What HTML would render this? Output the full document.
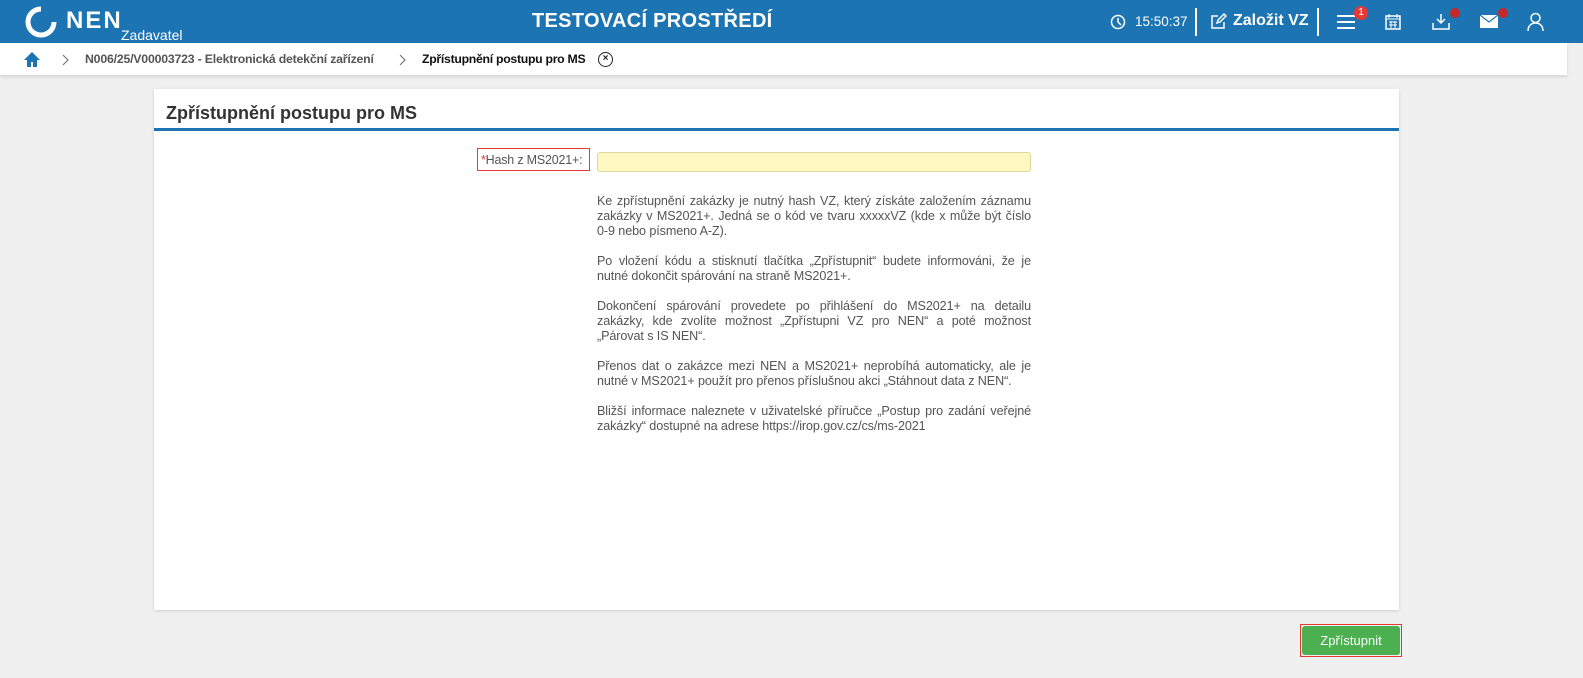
<!DOCTYPE html><html><head><meta charset="utf-8"><style>
*{box-sizing:border-box;margin:0;padding:0}
body{width:1583px;height:678px;background:#f0f0f0;font-family:"Liberation Sans",sans-serif;position:relative;overflow:hidden}
.hdr{position:absolute;left:0;top:0;width:1583px;height:43px;background:#1d74b2;color:#fff}
.bc{position:absolute;left:0;top:43px;width:1567px;height:32px;background:#fff;box-shadow:0 2px 3px rgba(0,0,0,.12);font-size:12.3px;font-weight:bold;color:#555;white-space:nowrap}
.card{position:absolute;left:154px;top:89px;width:1245px;height:521px;background:#fff;box-shadow:0 1px 3px rgba(0,0,0,.15)}
.p{position:absolute;left:597px;width:434px;font-size:12.6px;line-height:15px;color:#555;letter-spacing:-0.1px}
.p div{text-align:justify;text-align-last:justify;white-space:nowrap}
.p div.l{text-align-last:left}
.ic{position:absolute}
.hdr div{white-space:nowrap}
</style></head><body>
<div class="hdr">
<svg class="ic" style="left:25px;top:6px" width="32" height="32" viewBox="0 0 32 32"><path d="M16 3A13 13 0 1 0 29 16" fill="none" stroke="#fff" stroke-width="5"/><path d="M8 25A13 13 0 0 0 29 16" fill="none" stroke="#fff" stroke-width="2"/></svg>
<div style="position:absolute;left:66px;top:7px;font-size:24px;font-weight:bold;letter-spacing:2px">NEN</div>
<div style="position:absolute;left:121px;top:27px;font-size:14px">Zadavatel</div>
<div style="position:absolute;left:532px;top:10px;font-size:20px;font-weight:bold;letter-spacing:.3px">TESTOVACÍ PROSTŘEDÍ</div>
<svg class="ic" style="left:1110px;top:14px" width="16" height="16" viewBox="0 0 16 16"><circle cx="8" cy="8" r="6.5" fill="none" stroke="#fff" stroke-width="1.5"/><path d="M8 4v4l3 3" fill="none" stroke="#fff" stroke-width="1.5"/></svg>
<div style="position:absolute;left:1135px;top:14px;font-size:13.5px">15:50:37</div>
<div style="position:absolute;left:1195px;top:8px;width:2px;height:28px;background:#fff"></div>
<svg class="ic" style="left:1210px;top:13px" width="17" height="17" viewBox="0 0 17 17"><path d="M8 3H2v12h12V9M7 10l1-3 6-6 2 2-6 6z" fill="none" stroke="#fff" stroke-width="1.5"/></svg>
<div style="position:absolute;left:1233px;top:12px;font-size:16px;font-weight:bold">Založit VZ</div>
<div style="position:absolute;left:1317px;top:8px;width:2px;height:28px;background:#fff"></div>
<svg class="ic" style="left:1337px;top:14px" width="18" height="16"><path d="M0 2h18M0 8h18M0 14h18" stroke="#fff" stroke-width="2"/></svg>
<div style="position:absolute;left:1354px;top:6px;width:14px;height:14px;border-radius:7px;background:#e53935;font-size:10px;text-align:center;line-height:14px">1</div>
<svg class="ic" style="left:1385px;top:13px" width="16" height="17"><rect x="1" y="3" width="14" height="13" fill="none" stroke="#fff" stroke-width="1.5"/><path d="M1 6h14M4 1v4M12 1v4M4 9h8M4 12h8M6 8v7M10 8v7" stroke="#fff"/></svg>
<svg class="ic" style="left:1432px;top:14px" width="18" height="16"><path d="M9 0v9M5 5l4 4 4-4M1 9v6h16V9" fill="none" stroke="#fff" stroke-width="1.5"/></svg>
<div style="position:absolute;left:1450px;top:8px;width:10px;height:10px;border-radius:5px;background:#c62828"></div>
<svg class="ic" style="left:1480px;top:15px" width="18" height="13"><rect width="18" height="13" fill="#fff"/><path d="M0 0l9 7 9-7" fill="none" stroke="#1d74b2" stroke-width="1.2"/></svg>
<div style="position:absolute;left:1498px;top:8px;width:10px;height:10px;border-radius:5px;background:#c62828"></div>
<svg class="ic" style="left:1527px;top:12px" width="17" height="19"><circle cx="8.5" cy="6" r="4.5" fill="none" stroke="#fff" stroke-width="1.5"/><path d="M1 19c0-5 3-8 7.5-8s7.5 3 7.5 8" fill="none" stroke="#fff" stroke-width="1.5"/></svg>
</div>
<div class="bc">
<svg class="ic" style="left:23px;top:8px" width="18" height="16"><path d="M9 1L1 9h3v7h4v-5h2v5h4V9h3z" fill="#1d74b2"/></svg>
<svg class="ic" style="left:62px;top:11px" width="8" height="12"><path d="M1 1l5 5-5 5" fill="none" stroke="#777" stroke-width="1.2"/></svg>
<div style="position:absolute;left:85px;top:9px;letter-spacing:-0.2px">N006/25/V00003723 - Elektronická detekční zařízení</div>
<svg class="ic" style="left:399px;top:11px" width="8" height="12"><path d="M1 1l5 5-5 5" fill="none" stroke="#777" stroke-width="1.2"/></svg>
<div style="position:absolute;left:422px;top:9px;color:#111;letter-spacing:-0.3px">Zpřístupnění postupu pro MS</div>
<div style="position:absolute;left:598px;top:9px;width:15px;height:15px;border:1.5px solid #222;border-radius:50%;font-size:10px;line-height:11px;text-align:center;color:#222">×</div>
</div>
<div class="card">
<div style="position:absolute;left:12px;top:14px;font-size:18px;font-weight:bold;color:#333">Zpřístupnění postupu pro MS</div>
<div style="position:absolute;left:0;top:39px;width:1245px;height:3px;background:#1d74b2"></div>
<div style="position:absolute;left:323px;top:59px;width:113px;height:23px;border:1px solid #e53935;font-size:12.5px;color:#555;padding:4px 0 0 3px;white-space:nowrap;letter-spacing:-0.2px"><span style="color:#e53935">*</span>Hash z MS2021+:</div>
<div style="position:absolute;left:443px;top:63px;width:434px;height:20px;background:#fdf8c0;border:1px solid #ddd7a0;border-radius:3px"></div>
</div>
<div class="p" style="top:194px"><div>Ke zpřístupnění zakázky je nutný hash VZ, který získáte založením záznamu</div><div>zakázky v MS2021+. Jedná se o kód ve tvaru xxxxxVZ (kde x může být číslo</div><div class="l">0-9 nebo písmeno A-Z).</div></div>
<div class="p" style="top:254px"><div>Po vložení kódu a stisknutí tlačítka „Zpřístupnit“ budete informováni, že je</div><div class="l">nutné dokončit spárování na straně MS2021+.</div></div>
<div class="p" style="top:299px"><div>Dokončení spárování provedete po přihlášení do MS2021+ na detailu</div><div>zakázky, kde zvolíte možnost „Zpřístupni VZ pro NEN“ a poté možnost</div><div class="l">„Párovat s IS NEN“.</div></div>
<div class="p" style="top:359px"><div>Přenos dat o zakázce mezi NEN a MS2021+ neprobíhá automaticky, ale je</div><div class="l">nutné v MS2021+ použít pro přenos příslušnou akci „Stáhnout data z NEN“.</div></div>
<div class="p" style="top:404px"><div>Bližší informace naleznete v uživatelské příručce „Postup pro zadání veřejné</div><div class="l">zakázky“ dostupné na adrese https://irop.gov.cz/cs/ms-2021</div></div>
<div style="position:absolute;left:1300px;top:624px;width:102px;height:33px;border:1px solid #e53935;padding:1px"><div style="width:100%;height:100%;background:#4caf50;border-radius:3px;color:#fff;font-size:13px;text-align:center;line-height:29px">Zpřístupnit</div></div>
</body></html>
